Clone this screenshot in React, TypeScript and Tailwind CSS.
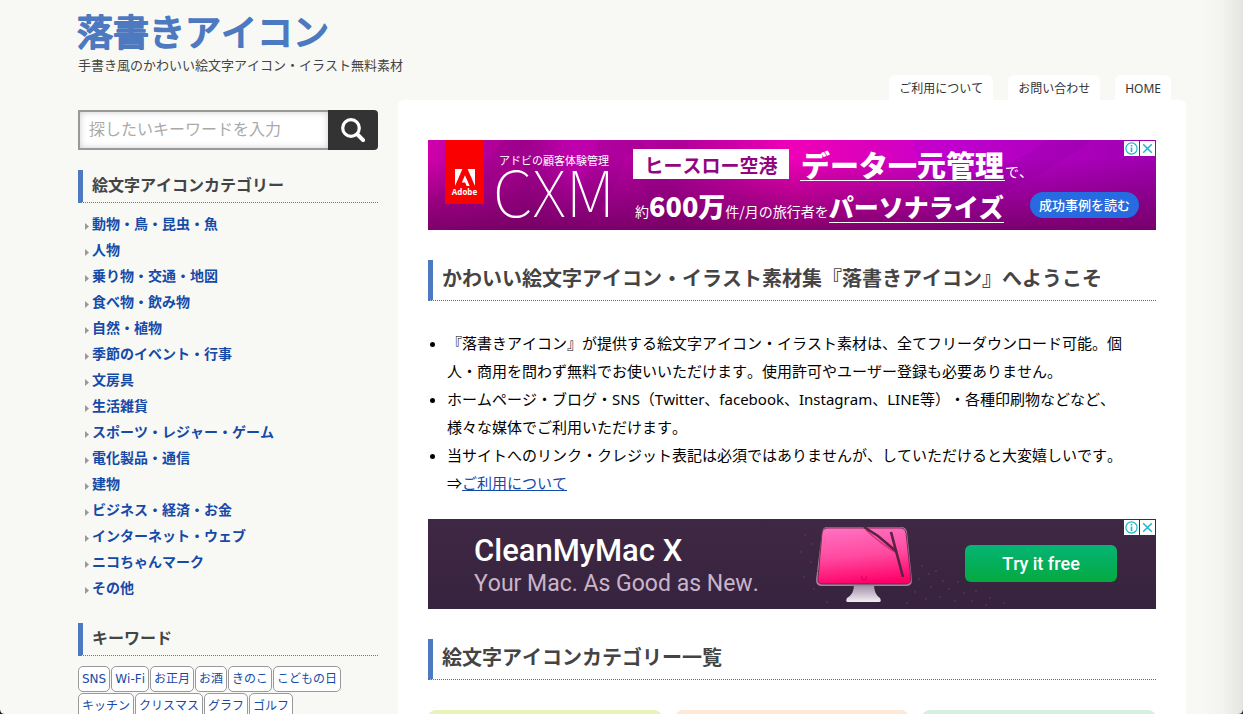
import type { ReactNode } from 'react';

const categories = [
  '動物・鳥・昆虫・魚',
  '人物',
  '乗り物・交通・地図',
  '食べ物・飲み物',
  '自然・植物',
  '季節のイベント・行事',
  '文房具',
  '生活雑貨',
  'スポーツ・レジャー・ゲーム',
  '電化製品・通信',
  '建物',
  'ビジネス・経済・お金',
  'インターネット・ウェブ',
  'ニコちゃんマーク',
  'その他',
];

const keywords = [
  ['SNS', 'Wi-Fi', 'お正月', 'お酒', 'きのこ', 'こどもの日'],
  ['キッチン', 'クリスマス', 'グラフ', 'ゴルフ'],
];

function SideTitle({ children }: { children: ReactNode }) {
  return (
    <h3 className="h-[33px] border-l-5 border-b border-l-[#4d79c0] border-b-[#4d79c0] [border-bottom-style:dotted] pl-[9px] text-base leading-[30px] font-bold text-[#444]">
      {children}
    </h3>
  );
}

function MainTitle({ children }: { children: ReactNode }) {
  return (
    <h2 className="h-[41px] border-l-5 border-b border-l-[#4d79c0] border-b-[#55699a] [border-bottom-style:dotted] pl-[9px] text-xl leading-[38px] font-bold text-[#444] whitespace-nowrap">
      {children}
    </h2>
  );
}

// info + close marks in the corner of every banner
function AdMarks() {
  return (
    <div className="absolute top-px right-px flex gap-px">
      <a href="#" aria-label="広告情報" className="block size-[15px] bg-white">
        <svg viewBox="0 0 15 15" className="size-[15px]" fill="none" stroke="#1fb5d0" strokeWidth="1.2">
          <circle cx="7.5" cy="7.5" r="5.6" />
          <path d="M7.5 6.5v4.5M7.5 4v1.4" strokeWidth="1.6" />
        </svg>
      </a>
      <button type="button" aria-label="閉じる" className="block size-[15px] bg-white">
        <svg viewBox="0 0 15 15" className="size-[15px]" fill="none" stroke="#1fb5d0" strokeWidth="1.5">
          <path d="M3.2 3.2l8.6 8.6M11.8 3.2l-8.6 8.6" />
        </svg>
      </button>
    </div>
  );
}

function AdobeAd() {
  return (
    <div className="relative flex h-[90px] text-white whitespace-nowrap font-['Noto_Sans_CJK_JP',sans-serif]">
      <svg className="absolute inset-0 size-full" viewBox="0 0 728 90" preserveAspectRatio="none">
        <defs>
          <linearGradient id="base" x1="0" y1="0" x2="1" y2="0">
            <stop offset="0" stopColor="#d000ac" />
            <stop offset="0.14" stopColor="#a0008e" />
            <stop offset="0.2" stopColor="#c000ae" />
            <stop offset="0.34" stopColor="#ac0098" />
            <stop offset="0.5" stopColor="#f000b8" />
            <stop offset="0.6" stopColor="#dc00bc" />
            <stop offset="0.72" stopColor="#c800cc" />
            <stop offset="1" stopColor="#9c00a2" />
          </linearGradient>
          <linearGradient id="shade" x1="0" y1="0" x2="0" y2="1">
            <stop offset="0.2" stopColor="#70005f" stopOpacity="0" />
            <stop offset="1" stopColor="#70005f" stopOpacity="0.85" />
          </linearGradient>
        </defs>
        <rect width="728" height="90" fill="url(#base)" />
        <path d="M0 58Q50 30 78 0h24Q60 50 0 90zM120 90Q165 40 170 0h30Q196 50 150 90zM230 90Q216 40 190 0h22Q250 45 262 90z" fill="#700068" opacity="0.12" />
        <path d="M485 0Q487 30 508 48L508 90H728V0z" fill="#a800d8" opacity="0.25" />
        <path d="M508 48Q580 30 620 0h44Q600 50 508 76z" fill="#7a0090" opacity="0.15" />
        <rect width="728" height="90" fill="url(#shade)" />
      </svg>
      <div className="relative ml-[17px] flex h-16 w-[39px] flex-col items-center justify-end bg-[#fa0000] pb-[6px]">
        <svg viewBox="0 0 20 17" className="h-[17px] w-5" fill="#fff">
          <path d="M0 0h7.4L0 17zM12.6 0H20v17zM10 6.2L14.7 17h-3.1l-1.4-3.4H6.8z" />
        </svg>
        <span className="font-['Open_Sans',sans-serif] text-[8px] leading-3 font-bold">Adobe</span>
      </div>
      <div className="relative ml-[9px] w-[140px] pt-3">
        <div className="pl-[6px] text-[11px] leading-4">アドビの顧客体験管理</div>
        <div className="text-[64px] leading-[42px] font-thin">CXM</div>
      </div>
      <div className="relative pt-px">
        <div className="flex h-[46px] items-center">
          <span className="flex h-[30px] w-[156px] items-center justify-center bg-white text-[19px] leading-none font-bold text-[#93057f]">
            ヒースロー空港
          </span>
          <span className="ml-[11px] flex items-baseline">
            <span className="border-b border-white px-px text-[29px] leading-8 font-black">データ一元管理</span>
            <span className="text-sm">で、</span>
          </span>
        </div>
        <div className="flex items-baseline pl-[2px] text-sm">
          約<span className="text-[27px] leading-[38px] font-black">600万</span>件/月の旅行者を
          <span className="border-b border-white text-[25px] leading-8 font-black">パーソナライズ</span>
        </div>
      </div>
      <a href="#" className="absolute right-[17px] bottom-3 flex h-[26px] w-[109px] items-center justify-center rounded-full bg-[#266be0] text-[13px] font-medium">
        成功事例を読む
      </a>
      <AdMarks />
    </div>
  );
}

function CleanMyMacAd() {
  return (
    <div className="relative flex h-[90px] items-center overflow-hidden bg-linear-to-b from-[#3f2843] to-[#37233f] pl-[46px] pr-[39px] font-[Roboto,sans-serif] whitespace-nowrap">
      <div className="w-[338px] pt-1">
        <div className="text-[31px] leading-9 font-medium text-white">CleanMyMac X</div>
        <div className="text-[23px] leading-[30px] text-[#c9b5cb]">Your Mac. As Good as New.</div>
      </div>
      <svg viewBox="0 0 110 90" className="h-[90px] w-[110px]">
        <defs>
          <linearGradient id="screen" x1="0.3" y1="0" x2="0.45" y2="1">
            <stop offset="0" stopColor="#ff70c0" />
            <stop offset="0.5" stopColor="#ff4aa0" />
            <stop offset="1" stopColor="#ff0068" />
          </linearGradient>
          <linearGradient id="stand" x1="0" y1="0" x2="0" y2="1">
            <stop offset="0" stopColor="#9c8ca4" />
            <stop offset="1" stopColor="#f2eef4" />
          </linearGradient>
        </defs>
        <path d="M42 66h20q0 9 6 13 2 4-1 4H36q-3 0-1-4 7-4 7-13z" fill="url(#stand)" />
        <path d="M15 8h74q5 0 6 5l5 48q0 6-6 6H10q-6 0-6-6L10 13q1-5 5-5z" fill="#a9809f" />
        <path d="M16 9h72q5 0 6 5l5 46q0 5-6 5H11q-6 0-5-5L10 14q1-5 6-5z" fill="url(#screen)" stroke="#60213f" strokeWidth="0.8" />
        <path d="M54 11q15 14 32 24" fill="none" stroke="#d9307e" strokeWidth="1.5" />
        <path d="M52 8l14 9 19 16M79 13l12 45" fill="none" stroke="#592440" strokeWidth="2.6" />
        <path d="M50 57a2.5 2.5 0 1 0 4 0" fill="none" stroke="#d0005c" />
      </svg>
      <svg viewBox="0 0 300 90" className="absolute inset-y-0 left-[370px] h-[90px] w-[300px]" fill="#7c3060" opacity="0.7">
        {[
          [7, 16], [14, 25], [3, 33], [13, 43], [20, 52], [6, 58], [16, 70], [124, 47], [131, 55], [121, 60],
          [138, 52], [145, 62], [133, 68], [151, 70], [160, 63], [142, 78], [166, 74], [157, 82], [178, 72],
          [174, 82], [192, 79], [188, 86], [206, 84], [128, 80], [117, 73], [29, 83], [109, 84],
        ].map(([x, y]) => (
          <circle key={`${x}-${y}`} cx={x} cy={y} r="0.9" />
        ))}
      </svg>
      <a href="#" className="relative mb-px ml-auto flex h-[37px] w-[152px] items-center justify-center rounded-md bg-linear-to-b from-[#05b574] to-[#06a93d] text-lg font-medium text-white">
        Try it free
      </a>
      <AdMarks />
    </div>
  );
}

export default function App() {
  return (
    <div className="relative h-screen overflow-hidden bg-[#f8f9f5] pr-[57px] pl-[78px] font-['Noto_Sans','Noto_Sans_CJK_JP',sans-serif] [font-kerning:none] [text-spacing-trim:space-all]">
      <header className="flex h-[100px] items-end justify-between">
        <div className="self-start pt-3">
          <h1>
            <a href="#" className="block">
              <svg viewBox="0 0 260 42" className="h-[42px] w-[260px] overflow-visible">
                <text
                  x="-1"
                  y="34"
                  fontSize="36"
                  fontWeight="400"
                  fill="#4d79c0"
                  stroke="#4d79c0"
                  strokeWidth="2"
                  strokeLinejoin="round"
                >
                  落書きアイコン
                </text>
              </svg>
            </a>
          </h1>
          <p className="text-[13px] leading-[22px] text-[#444]">手書き風のかわいい絵文字アイコン・イラスト無料素材</p>
        </div>
        <nav className="mr-[15px] flex gap-[15px] text-xs leading-[27px] text-[#333]">
          <a href="#" className="h-[25px] rounded-t-md bg-white px-[10px]">ご利用について</a>
          <a href="#" className="h-[25px] rounded-t-md bg-white px-[10px]">お問い合わせ</a>
          <a href="#" className="h-[25px] rounded-t-md bg-white px-[10px]">HOME</a>
        </nav>
      </header>

      <div className="flex gap-5">
        <aside className="w-[300px] shrink-0 pt-[10px]">
          <form className="mb-5 flex h-10" onSubmit={(e) => e.preventDefault()}>
            <input
              type="text"
              aria-label="キーワード検索"
              placeholder="探したいキーワードを入力"
              className="min-w-0 flex-1 border-2 border-r-0 border-[#999] bg-white px-[9px] pb-0.5 text-base shadow-[inset_0_0_6px_#ccc] outline-none placeholder:text-[#aaa]"
            />
            <button type="submit" aria-label="検索" className="flex w-[50px] items-center justify-center rounded-r-[4px] bg-[#333]">
              <svg viewBox="0 0 24 24" className="size-6" fill="none" stroke="#fff" strokeLinecap="round">
                <circle cx="10" cy="10" r="8.3" strokeWidth="3.2" />
                <path d="M16.5 16.5l5.6 5.6" strokeWidth="4" />
              </svg>
            </button>
          </form>

          <SideTitle>絵文字アイコンカテゴリー</SideTitle>
          <ul className="mt-2 mb-[22px] pl-[7px] text-sm leading-[26px] font-bold text-[#164aa8]">
            {categories.map((name) => (
              <li key={name} className="flex h-[26px] items-center gap-[3px]">
                <svg viewBox="0 0 4 7" className="mt-1 h-[7px] w-1" fill="#999">
                  <path d="M0 0l4 3.5L0 7z" />
                </svg>
                <a href="#">{name}</a>
              </li>
            ))}
          </ul>

          <SideTitle>キーワード</SideTitle>
          <div className="mt-[10px] flex flex-col gap-px font-['DejaVu_Sans','Noto_Sans_CJK_JP',sans-serif] text-xs leading-6 text-[#164aa8]">
            {keywords.map((row) => (
              <div key={row[0]} className="flex gap-px">
                {row.map((word) => (
                  <a key={word} href="#" className="h-[26px] rounded-[5px] border border-[#999] bg-white px-[3px] whitespace-nowrap">
                    {word}
                  </a>
                ))}
              </div>
            ))}
          </div>
        </aside>

        <main className="min-h-screen min-w-0 flex-1 rounded-t-md bg-white px-[30px] pt-10">
          <AdobeAd />
          <div className="mt-[30px]">
            <MainTitle>かわいい絵文字アイコン・イラスト素材集『落書きアイコン』へようこそ</MainTitle>
          </div>
          <ul className="mt-7 mb-[22px] list-disc pr-6 pl-[19px] text-[15px] leading-7 text-black">
            <li>『落書きアイコン』が提供する絵文字アイコン・イラスト素材は、全てフリーダウンロード可能。個人・商用を問わず無料でお使いいただけます。使用許可やユーザー登録も必要ありません。</li>
            <li>ホームページ・ブログ・SNS（Twitter、facebook、Instagram、LINE等）・各種印刷物などなど、様々な媒体でご利用いただけます。</li>
            <li>
              当サイトへのリンク・クレジット表記は必須ではありませんが、していただけると大変嬉しいです。⇒<a href="#" className="text-[#164aa8] underline">ご利用について</a>
            </li>
          </ul>
          <CleanMyMacAd />
          <div className="mt-[30px]">
            <MainTitle>絵文字アイコンカテゴリー一覧</MainTitle>
          </div>
          <div className="mt-[30px] grid grid-cols-3 gap-[13px]">
            <div className="h-40 rounded-lg bg-[#e8f3b8]" />
            <div className="h-40 rounded-lg bg-[#ffe8d6]" />
            <div className="h-40 rounded-lg bg-[#d5efe1]" />
          </div>
        </main>
      </div>

      {/* window edge shadow */}
      <div className="absolute inset-y-0 right-0 w-11 bg-linear-to-r from-transparent via-black/2 to-black/8" />
      <svg viewBox="0 0 5 5" className="absolute right-0 bottom-0 size-[5px]" fill="#1f2937">
        <path d="M5 0v5H0Q5 5 5 0z" />
      </svg>
      <svg viewBox="0 0 5 5" className="absolute bottom-0 left-0 size-[5px]" fill="#1a1a1a">
        <path d="M0 0v5h5Q0 5 0 0z" />
      </svg>
    </div>
  );
}
